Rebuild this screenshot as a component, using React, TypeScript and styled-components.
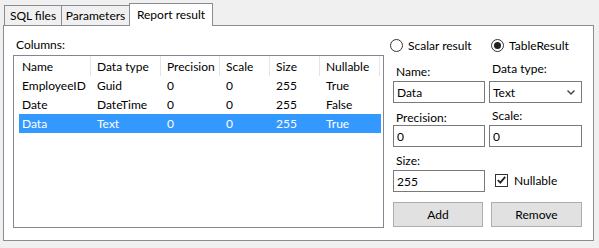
import React from "react";
import styled, { createGlobalStyle } from "styled-components";

const GlobalStyle = createGlobalStyle`
  html, body {
    margin: 0;
    padding: 0;
    background: #f0f0f0;
  }
  body {
    font-family: Lato, "Liberation Sans", Arial, sans-serif;
    font-size: 12px;
    color: #000;
  }
`;

const headerCols = [
  { title: "Name", width: 75 },
  { title: "Data type", width: 70 },
  { title: "Precision", width: 59 },
  { title: "Scale", width: 50 },
  { title: "Size", width: 50 },
  { title: "Nullable", width: 60 },
];

const rowCols = [72, 70, 59, 50, 50, 61];

const rows = [
  ["EmployeeID", "Guid", "0", "0", "255", "True"],
  ["Date", "DateTime", "0", "0", "255", "False"],
  ["Data", "Text", "0", "0", "255", "True"],
];

const App = () => {
  return (
    <Page>
      <GlobalStyle />
      <TabStrip>
        <Tab $width={58}>SQL files</Tab>
        <Tab $width={69}>Parameters</Tab>
        <Tab $width={84} $active>
          Report result
        </Tab>
      </TabStrip>
      <Panel>
        <LeftColumn>
          <Caption>Columns:</Caption>
          <ListBox>
            <HeaderRow>
              {headerCols.map((c) => (
                <HeaderCell key={c.title} $width={c.width}>
                  {c.title}
                </HeaderCell>
              ))}
            </HeaderRow>
            {rows.map((r, i) => (
              <Row key={r[0]} $selected={i === 2}>
                {r.map((v, j) => (
                  <Cell key={j} $width={rowCols[j]} $first={j === 0}>
                    {v}
                  </Cell>
                ))}
              </Row>
            ))}
          </ListBox>
        </LeftColumn>
        <Form>
          <RadioRow>
            <RadioOption $offset={-3}>
              <RadioCircle />
              Scalar result
            </RadioOption>
            <RadioOption $offset={2}>
              <RadioCircle $checked />
              TableResult
            </RadioOption>
          </RadioRow>

          <FieldLabel $mb={2}>Name:</FieldLabel>
          <FieldLabel $mb={5}>Data type:</FieldLabel>
          <TextBox defaultValue="Data" />
          <ComboBox>
            <span>Text</span>
            <svg width="8" height="5" viewBox="0 0 8 5">
              <polyline
                points="0.5,0.5 4,4 7.5,0.5"
                fill="none"
                stroke="#444"
                strokeWidth="1.4"
              />
            </svg>
          </ComboBox>

          <FieldLabel $mb={0}>Precision:</FieldLabel>
          <FieldLabel $mb={2}>Scale:</FieldLabel>
          <TextBox defaultValue="0" />
          <TextBox defaultValue="0" />

          <FieldLabel $mb={2}>Size:</FieldLabel>
          <span />
          <TextBox defaultValue="255" />
          <CheckOption>
            <CheckBox>
              <svg width="9" height="8" viewBox="0 0 9 8">
                <polyline
                  points="0.8,4 3.3,6.6 8.2,0.8"
                  fill="none"
                  stroke="#222"
                  strokeWidth="1.8"
                />
              </svg>
            </CheckBox>
            Nullable
          </CheckOption>

          <Button $width={90}>Add</Button>
          <Button $width={91} $offset={2}>
            Remove
          </Button>
        </Form>
      </Panel>
    </Page>
  );
};

export default App;

const Page = styled.div`
  width: 599px;
  height: 248px;
  padding-top: 3px;
  box-sizing: border-box;
  overflow: hidden;
`;

const TabStrip = styled.div`
  display: flex;
  align-items: flex-end;
  height: 22px;
  padding-left: 4px;
`;

const Tab = styled.div<{ $width: number; $active?: boolean }>`
  box-sizing: border-box;
  width: ${(p) => p.$width}px;
  height: ${(p) => (p.$active ? 23 : 20)}px;
  margin-bottom: ${(p) => (p.$active ? -1 : 0)}px;
  border: 1px solid #898c95;
  border-bottom: none;
  background: ${(p) => (p.$active ? "#ffffff" : "#f0f0f0")};
  position: relative;
  z-index: ${(p) => (p.$active ? 1 : 0)};
  display: flex;
  align-items: center;
  justify-content: center;
  padding-bottom: ${(p) => (p.$active ? 2 : 0)}px;
  & + & {
    margin-left: -1px;
  }
`;

const Panel = styled.div`
  margin-left: 3px;
  width: 591px;
  height: 216px;
  box-sizing: border-box;
  border: 1px solid #898c95;
  background: #fff;
  display: flex;
  gap: 9px;
  padding: 11px 0 0 9px;
`;

const LeftColumn = styled.div`
  display: flex;
  flex-direction: column;
  width: 371px;
`;

const Caption = styled.div`
  line-height: 15px;
  margin-left: 3px;
  margin-bottom: 3px;
`;

const ListBox = styled.div`
  box-sizing: border-box;
  height: 173px;
  border: 1px solid #828790;
  background: #fff;
  overflow: hidden;
`;

const HeaderRow = styled.div`
  display: flex;
  height: 20px;
  padding-left: 2px;
`;

const HeaderCell = styled.div<{ $width: number }>`
  box-sizing: border-box;
  width: ${(p) => p.$width}px;
  padding-left: 6px;
  border-right: 1px solid #e5e5e5;
  display: flex;
  align-items: center;
  white-space: nowrap;
`;

const Row = styled.div<{ $selected?: boolean }>`
  display: flex;
  height: 19px;
  margin-left: 5px;
  width: 362px;
  background: ${(p) => (p.$selected ? "#3399ff" : "transparent")};
  color: ${(p) => (p.$selected ? "#fff" : "#000")};
`;

const Cell = styled.div<{ $width: number; $first?: boolean }>`
  box-sizing: border-box;
  width: ${(p) => p.$width}px;
  padding-left: ${(p) => (p.$first ? 3 : 6)}px;
  display: flex;
  align-items: center;
  white-space: nowrap;
`;

const Form = styled.div`
  display: grid;
  grid-template-columns: 92px 93px;
  grid-template-rows: 16px 28px 22px 22px 22px 23px 22px 35px;
  column-gap: 4px;
`;

const RadioRow = styled.div`
  grid-column: 1 / -1;
  display: grid;
  grid-template-columns: 92px 93px;
  column-gap: 4px;
  align-items: center;
`;

const RadioOption = styled.label<{ $offset: number }>`
  display: flex;
  align-items: center;
  gap: 5px;
  margin-left: ${(p) => p.$offset}px;
  white-space: nowrap;
`;

const RadioCircle = styled.span<{ $checked?: boolean }>`
  box-sizing: border-box;
  width: 13px;
  height: 13px;
  border: 1px solid #333;
  border-radius: 50%;
  background: #fff;
  display: flex;
  align-items: center;
  justify-content: center;
  &::after {
    content: "";
    display: ${(p) => (p.$checked ? "block" : "none")};
    width: 7px;
    height: 7px;
    border-radius: 50%;
    background: #222;
  }
`;

const FieldLabel = styled.div<{ $mb: number }>`
  align-self: end;
  line-height: 15px;
  margin-left: 3px;
  margin-bottom: ${(p) => p.$mb}px;
  white-space: nowrap;
`;

const TextBox = styled.input`
  box-sizing: border-box;
  width: 100%;
  height: 22px;
  margin: 0;
  border: 1px solid #7a7a7a;
  padding: 0 3px;
  font: inherit;
  color: #000;
  background: #fff;
  outline: none;
`;

const ComboBox = styled.div`
  box-sizing: border-box;
  height: 22px;
  border: 1px solid #7a7a7a;
  padding: 0 6px 0 3px;
  display: flex;
  align-items: center;
  justify-content: space-between;
  background: #fff;
`;

const CheckOption = styled.label`
  display: flex;
  align-items: center;
  gap: 6px;
  margin-left: 6px;
  margin-top: -2px;
`;

const CheckBox = styled.span`
  box-sizing: border-box;
  width: 13px;
  height: 13px;
  border: 1px solid #333;
  background: #fff;
  display: flex;
  align-items: center;
  justify-content: center;
`;

const Button = styled.button<{ $width: number; $offset?: number }>`
  align-self: end;
  box-sizing: border-box;
  width: ${(p) => p.$width}px;
  height: 25px;
  margin: 0 0 0 ${(p) => p.$offset ?? 0}px;
  padding: 0;
  border: 1px solid #adadad;
  background: #e1e1e1;
  font: inherit;
  color: #000;
`;
